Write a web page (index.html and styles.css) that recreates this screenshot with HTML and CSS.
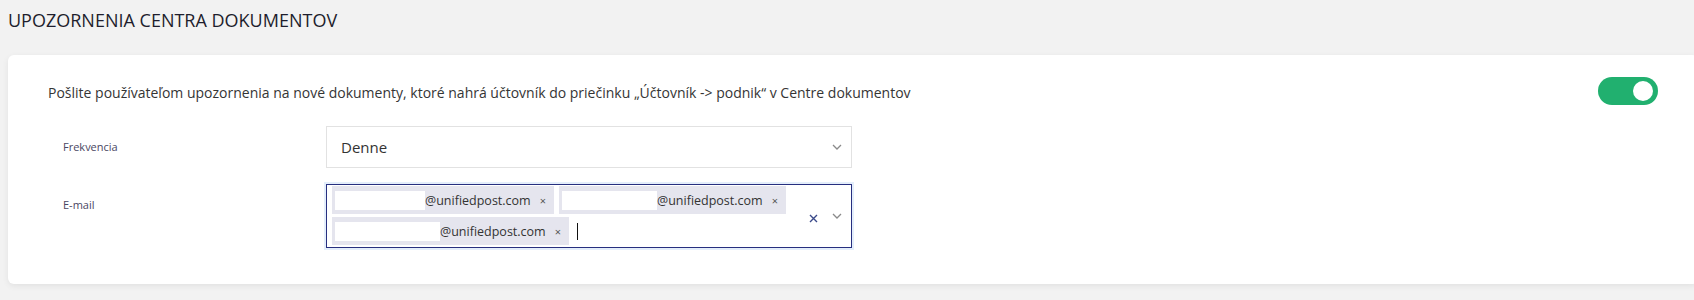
FILE: index.html
```html
<!DOCTYPE html>
<html lang="sk">
<head>
<meta charset="utf-8">
<title>Upozornenia centra dokumentov</title>
<link rel="stylesheet" href="styles.css">
</head>
<body>
<div class="page">
  <h1 class="title">UPOZORNENIA CENTRA DOKUMENTOV</h1>
  <section class="card">
    <div class="intro">
      <p class="desc">Pošlite používateľom upozornenia na nové dokumenty, ktoré nahrá účtovník do priečinku „Účtovník -&gt; podnik“ v Centre dokumentov</p>
      <span class="toggle"><span class="knob"></span></span>
    </div>
    <div class="form">
      <label class="label">Frekvencia</label>
      <div class="select">
        <span class="value">Denne</span>
        <svg class="chev" width="10" height="6" viewBox="0 0 10 6"><path d="M1 1 L5 5 L9 1" fill="none" stroke="#8a8a8a" stroke-width="1.3"/></svg>
      </div>
      <label class="label">E-mail</label>
      <div class="multi">
        <div class="chips">
          <span class="chip"><span class="mask m1"></span><span class="addr">@unifiedpost.com</span><span class="x">×</span></span>
          <span class="chip"><span class="mask m2"></span><span class="addr">@unifiedpost.com</span><span class="x">×</span></span>
          <span class="chip"><span class="mask m3"></span><span class="addr">@unifiedpost.com</span><span class="x">×</span></span>
          <span class="caret"></span>
        </div>
        <div class="indicators">
          <svg class="clear" width="9" height="9" viewBox="0 0 9 9"><path d="M1 1 L8 8 M8 1 L1 8" fill="none" stroke="#3b4a8a" stroke-width="1.4"/></svg>
          <svg class="chev" width="10" height="6" viewBox="0 0 10 6"><path d="M1 1 L5 5 L9 1" fill="none" stroke="#8a8a8a" stroke-width="1.3"/></svg>
        </div>
      </div>
    </div>
  </section>
</div>
</body>
</html>
```
FILE: styles.css
```css
html, body {
  margin: 0;
  padding: 0;
  overflow: hidden;
  background: #f2f2f2;
}
.page {
  padding: 8px;
  font-family: "Open Sans", "Noto Sans", sans-serif;
}
.title {
  margin: 0 0 23px 0;
  font-size: 18px;
  line-height: 24px;
  font-weight: 400;
  color: #1e1e2d;
}
.card {
  background: #ffffff;
  border-radius: 6px;
  box-shadow: 0 2px 6px rgba(0, 0, 0, 0.07);
  margin-right: -12px;
  padding: 22px 40px 36px 40px;
}
.intro {
  display: flex;
  align-items: center;
  justify-content: space-between;
  height: 28px;
}
.desc {
  margin: 0;
  padding-top: 3px;
  font-size: 14px;
  line-height: 20px;
  color: #353535;
}
.toggle {
  width: 60px;
  height: 28px;
  border-radius: 14px;
  background: #21b06f;
  display: flex;
  align-items: center;
  justify-content: flex-end;
  padding-right: 5px;
  box-sizing: border-box;
}
.knob {
  width: 20px;
  height: 20px;
  border-radius: 50%;
  background: #ffffff;
}
.form {
  margin-top: 21px;
  display: grid;
  grid-template-columns: 263px 526px;
  row-gap: 16px;
  padding-left: 15px;
}
.label {
  font-size: 11px;
  line-height: 42px;
  color: #4a4763;
}
.select {
  height: 42px;
  box-sizing: border-box;
  border: 1px solid #e2e2e2;
  display: flex;
  align-items: center;
  justify-content: space-between;
  padding: 0 9px 0 14px;
}
.value {
  font-size: 15px;
  color: #333333;
}
.chev {
  display: block;
}
.multi {
  height: 64px;
  box-sizing: border-box;
  border: 1px solid #272f7f;
  box-shadow: 0 0 0 2px #e4eefb;
  display: flex;
  align-items: center;
  padding: 1px 9px 1px 5px;
}
.chips {
  flex: 1;
  display: flex;
  flex-wrap: wrap;
  align-items: center;
  column-gap: 5px;
  row-gap: 3px;
  align-self: flex-start;
  padding-right: 8px;
}
.chip {
  display: flex;
  align-items: center;
  height: 28px;
  background: #e5e5ee;
  padding: 0 8px 0 3px;
  font-size: 12.5px;
  color: #333333;
}
.mask {
  display: block;
  height: 19px;
  background: #ffffff;
}
.m1 { width: 90px; }
.m2 { width: 95px; }
.m3 { width: 105px; }
.addr {
  white-space: nowrap;
}
.x {
  margin-left: 9px;
  font-size: 11px;
  color: #555555;
}
.caret {
  width: 1px;
  height: 17px;
  background: #111111;
  margin-left: 3px;
}
.indicators {
  display: flex;
  align-items: center;
  gap: 14px;
}
.clear {
  display: block;
  margin-top: 4px;
}
```
